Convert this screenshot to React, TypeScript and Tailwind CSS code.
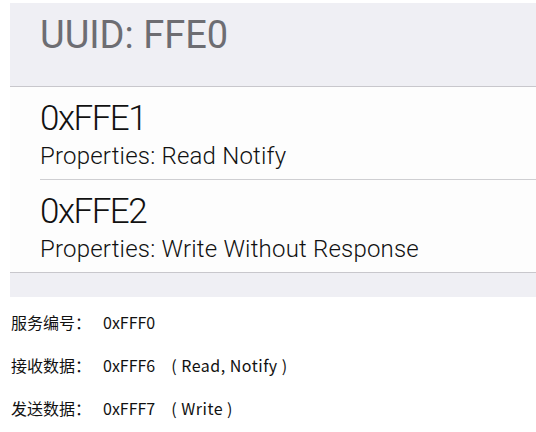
export default function App() {
  const chars = [
    { uuid: "0xFFE1", props: "Properties: Read Notify" },
    { uuid: "0xFFE2", props: "Properties: Write Without Response" },
  ];

  const info = [
    { label: "服务编号：", value: "0xFFF0", extra: "" },
    { label: "接收数据：", value: "0xFFF6", extra: "( Read, Notify )" },
    { label: "发送数据：", value: "0xFFF7", extra: "( Write )" },
  ];

  return (
    <div className="min-h-screen bg-white pl-[10px] pt-[3px]">
      {/* iOS screenshot */}
      <div className="bg-[#efeff4] font-['Roboto',sans-serif]">
        <div className="h-[84px] border-b border-[#c8c7cc] pl-[30px] pt-[9px]">
          <p className="text-[38px] leading-[46px] text-[#6d6d72]">UUID: FFE0</p>
        </div>
        <div className="bg-[#fdfdfd]">
          {chars.map((c, i) => (
            <div key={c.uuid} className="pl-[30px]">
              <div
                className={`pt-[12px] ${i === 0 ? "h-[93px] border-b border-[#cfcfd2]" : "h-[92px]"}`}
              >
                <p className="text-[35px] leading-[40px] font-light text-[#111] tracking-[-1.5px]">{c.uuid}</p>
                <p className="text-[24px] leading-[30px] font-light text-[#111] mt-[2px] tracking-[0.2px]">{c.props}</p>
              </div>
            </div>
          ))}
        </div>
        <div className="h-[25px] border-t border-[#c8c7cc]" />
      </div>

      {/* Service info */}
      <div className="pt-[3px] font-['Noto_Sans_CJK_SC',sans-serif] text-[16px] text-[#111]">
        {info.map((r) => (
          <div key={r.label} className="h-[43px] flex items-center">
            <span className="w-[93px] pl-[1px]">{r.label}</span>
            <span>{r.value}</span>
            {r.extra && <span className="ml-[16px] tracking-[0.5px]">{r.extra}</span>}
          </div>
        ))}
      </div>
    </div>
  );
}
